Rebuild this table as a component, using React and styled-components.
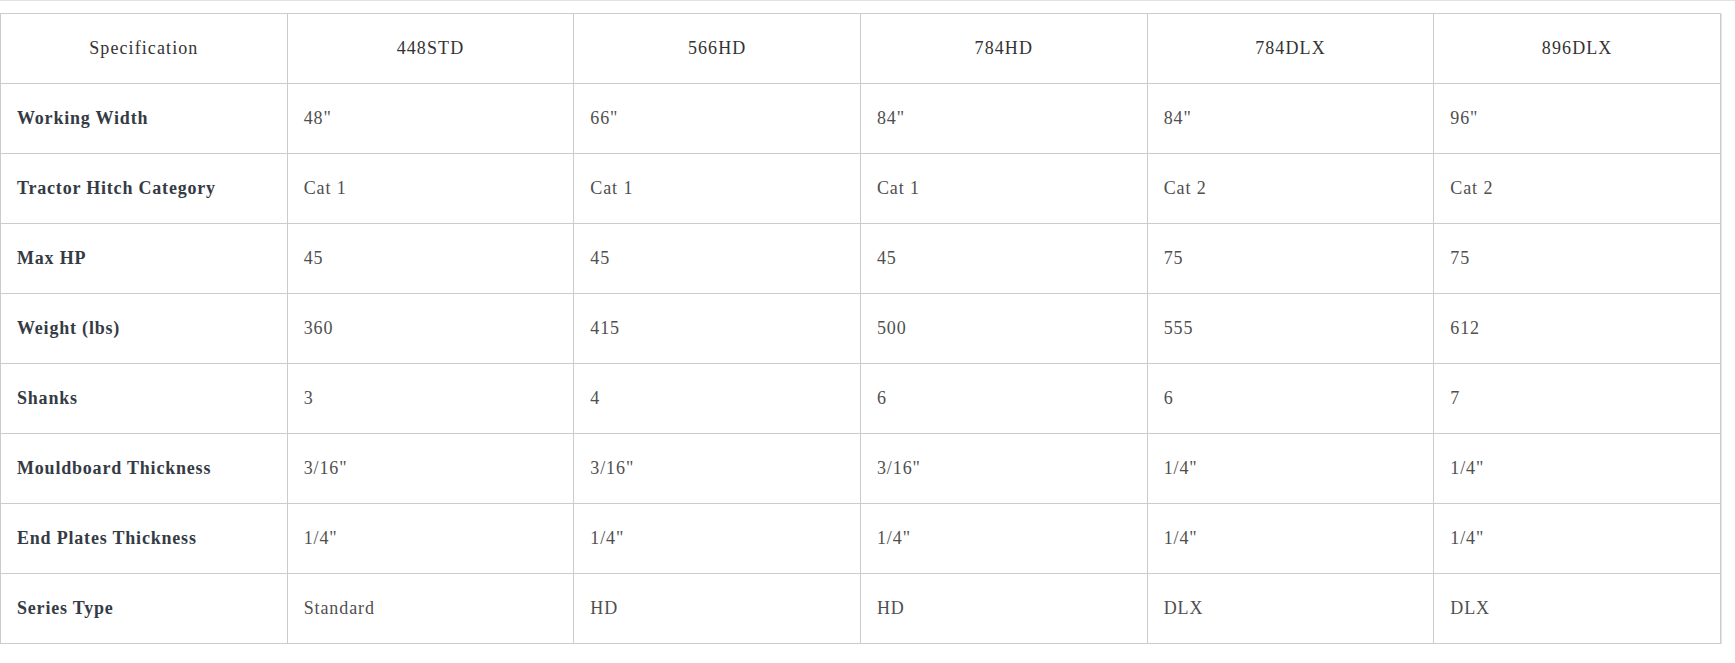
import React from "react";
import styled, { createGlobalStyle } from "styled-components";

const GlobalStyle = createGlobalStyle`
  html, body {
    margin: 0;
    padding: 0;
    background: #fff;
  }
  body {
    font-family: "Liberation Serif", "DejaVu Serif", serif;
  }
`;

const Page = styled.div`
  border-top: 1px solid #e2e2e2;
  padding-top: 12px;
  width: 100%;
`;

const SpecTable = styled.table`
  width: 1721px;
  border-collapse: collapse;
  table-layout: fixed;
  box-shadow: 1px 1px 0 0 #e4e4e4;
  border: 1px solid #cccccc;
`;

const HeadCell = styled.th`
  height: 69px;
  padding: 0 16px;
  border: 1px solid #cccccc;
  font-weight: 400;
  font-size: 18px;
  letter-spacing: 1.1px;
  color: #333333;
  text-align: center;
  vertical-align: middle;
`;

const Cell = styled.td`
  height: 69px;
  padding: 0 16px;
  border: 1px solid #cccccc;
  font-size: 18px;
  letter-spacing: ${(p) => (p.$label ? "0.8px" : "0.9px")};
  font-weight: ${(p) => (p.$label ? 700 : 400)};
  color: ${(p) => (p.$label ? "#353b45" : "#4f4f4f")};
  text-align: left;
  vertical-align: middle;
`;

const models = ["448STD", "566HD", "784HD", "784DLX", "896DLX"];

const rows = [
  ["Working Width", '48"', '66"', '84"', '84"', '96"'],
  ["Tractor Hitch Category", "Cat 1", "Cat 1", "Cat 1", "Cat 2", "Cat 2"],
  ["Max HP", "45", "45", "45", "75", "75"],
  ["Weight (lbs)", "360", "415", "500", "555", "612"],
  ["Shanks", "3", "4", "6", "6", "7"],
  ["Mouldboard Thickness", '3/16"', '3/16"', '3/16"', '1/4"', '1/4"'],
  ["End Plates Thickness", '1/4"', '1/4"', '1/4"', '1/4"', '1/4"'],
  ["Series Type", "Standard", "HD", "HD", "DLX", "DLX"],
];

export default function App() {
  return (
    <>
      <GlobalStyle />
      <Page>
        <SpecTable>
          <thead>
            <tr>
              <HeadCell>Specification</HeadCell>
              {models.map((m) => (
                <HeadCell key={m}>{m}</HeadCell>
              ))}
            </tr>
          </thead>
          <tbody>
            {rows.map(([label, ...vals]) => (
              <tr key={label}>
                <Cell $label>{label}</Cell>
                {vals.map((v, i) => (
                  <Cell key={i}>{v}</Cell>
                ))}
              </tr>
            ))}
          </tbody>
        </SpecTable>
      </Page>
    </>
  );
}
